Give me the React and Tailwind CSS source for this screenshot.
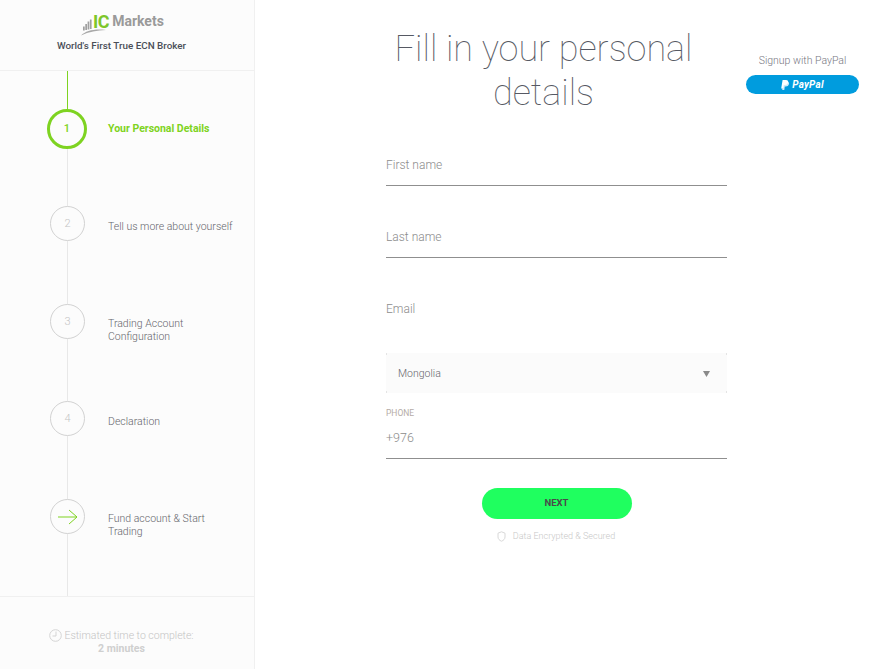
import React from 'react';

const steps = [
  { n: '2', label: ['Tell us more about yourself'], h: 'h-[98px]', mt: 'mt-[14px]' },
  { n: '3', label: ['Trading Account', 'Configuration'], h: 'h-[97px]', mt: 'mt-[13px]' },
  { n: '4', label: ['Declaration'], h: 'h-[98px]', mt: 'mt-[14px]' },
];

const Field = ({ label, line, className }) => (
  <div className={`flex items-center text-[12px] font-light text-[#8c8c8c] ${line ? 'border-b border-[#8f8f8f]' : ''} ${className}`}>
    {label}
  </div>
);

const Sidebar = () => (
  <aside className="relative flex w-[255px] shrink-0 flex-col border-r border-[#f0f0f0] bg-[#fcfcfc]">
    <div className="flex h-[71px] flex-col items-center border-b border-[#f0f0f0] pr-[11px]">
      <div className="ml-[2px] mt-[11px] flex h-[26px] items-start">
        <svg width="28" height="26" viewBox="0 0 28 26">
          <path d="M2 19.500h1.700v-4H2zM4.300 19h1.700v-6H4.300zM6.600 18.500h1.700V10.500H6.600zM8.900 18h1.700V8.500H8.900z" fill="#a0a0a0" />
          <path d="M0 24.500C5 19.500 14 17.500 25 19 16 19.500 8 20.500 0 24.500z" fill="#a8a8a8" />
        </svg>
        <span className="ml-[-16px] text-[18px] font-bold leading-[21px] tracking-[-0.5px] text-[#7dc62b]">IC</span>
        <span className="ml-[3px] text-[14px] font-bold leading-[21px] text-[#9a9a9a]">Markets</span>
      </div>
      <div className="mt-[2px] text-[9.850px] font-medium text-[#4b4f58]">World's First True ECN Broker</div>
    </div>

    <div className="absolute left-[67px] top-[71px] h-[525px] w-px bg-[#e8e8e8]" />
    <div className="absolute left-[67px] top-[71px] h-[38px] w-px bg-[#7ed321]" />

    <div className="relative h-[525px]">
      <div className="flex h-[78px] items-end pl-[47px]">
        <div className="flex h-[40px] w-[40px] items-center justify-center rounded-full border-[3px] border-[#7ed321] bg-[#fcfcfc] text-[11px] font-medium text-[#7ed321]">1</div>
        <div className="ml-[21px] flex h-[40px] items-center text-[10.500px] font-bold text-[#7ed321]">Your Personal Details</div>
      </div>
      <div className="h-[57px]" />
      {steps.map((s) => (
        <div key={s.n} className={`flex items-start pl-[50px] ${s.h}`}>
          <div className="flex h-[35px] w-[35px] shrink-0 items-center justify-center rounded-full border border-[#d2d2d2] bg-[#fcfcfc] pt-[1px] text-[11px] font-light text-[#c4c4c4]">{s.n}</div>
          <div className={`ml-[23px] text-[10.500px] font-light leading-[13px] text-[#66666c] ${s.mt}`}>
            {s.label.map((l) => <div key={l}>{l}</div>)}
          </div>
        </div>
      ))}
      <div className="flex items-start pl-[50px]">
        <div className="flex h-[35px] w-[35px] shrink-0 items-center justify-center rounded-full border border-[#d2d2d2] bg-[#fcfcfc]">
          <svg width="21" height="16" viewBox="0 0 21 16" fill="none" stroke="#7ed321" strokeWidth="1">
            <path d="M1 8h19M12 1l8 7-8 7" />
          </svg>
        </div>
        <div className="ml-[23px] mt-[13px] text-[10.500px] font-light leading-[13px] text-[#66666c]">
          <div>Fund account &amp; Start</div>
          <div>Trading</div>
        </div>
      </div>
    </div>

    <div className="flex flex-1 flex-col items-center border-t border-[#f0f0f0] pr-[11px] pt-[32px] text-[10.500px] font-light leading-[13px] text-[#c4c4c4]">
      <div className="flex items-center">
        <svg width="13" height="13" viewBox="0 0 13 13" fill="none" stroke="#d4d4d4" strokeWidth="1">
          <circle cx="6.500" cy="6.500" r="5.800" />
          <path d="M7 2.500v4.500H3.500" />
        </svg>
        <span className="ml-[2px]">Estimated time to complete:</span>
      </div>
      <div className="font-bold text-[#cfcfcf]">2 minutes</div>
    </div>
  </aside>
);

const App = () => {
  return (
    <div className="flex h-[669px] w-[875px] overflow-hidden bg-white font-['Roboto',sans-serif]">
      <Sidebar />

      <main className="flex">
        <div className="ml-[131px] w-[341px]">
          <h1 className="mt-[27px] w-[315px] text-center text-[36px] font-thin leading-[44px] text-[#565963]">
            Fill in your personal details
          </h1>
          <Field label="First name" line className="mt-[30px] h-[41px]" />
          <Field label="Last name" line className="mt-[30px] h-[42px]" />
          <Field label="Email" className="mt-[30px] h-[42px] pb-[1px]" />
          <div className="relative mt-[23px] flex h-[40px] items-center justify-between bg-[#fbfbfb] pl-[12px] pr-[17px] pt-[1px] text-[10.500px] font-light text-[#66666c]">
            Mongolia
            <svg width="7" height="6" viewBox="0 0 7 6"><path d="M0 0h7L3.500 6z" fill="#8a8a8a" /></svg>
            <span className="absolute left-0 top-0 h-[2px] w-px bg-[#e4e4e4]" />
            <span className="absolute right-0 top-0 h-[2px] w-px bg-[#e4e4e4]" />
            <span className="absolute bottom-0 left-0 h-[2px] w-px bg-[#e4e4e4]" />
            <span className="absolute bottom-0 right-0 h-[2px] w-px bg-[#e4e4e4]" />
          </div>
          <div className="mt-[15px] text-[8.500px] leading-[10px] text-[#b5aca6]">PHONE</div>
          <Field label="+976" line className="h-[41px] pt-[1px] !text-[12.500px]" />
          <button className="mx-auto mt-[29px] flex h-[31px] w-[150px] items-center justify-center rounded-full bg-[#1fff5f] text-[9.500px] font-bold text-[#4a4a4a]">
            NEXT
          </button>
          <div className="mt-[11px] flex items-center justify-center pr-[1px] text-[9px] font-light text-[#c8c8c8]">
            <svg width="9" height="11" viewBox="0 0 9 11" fill="none" stroke="#d8d8d8" strokeWidth="1">
              <path d="M4.500 .800 8 2.200V6c0 2-1.500 3.400-3.500 4.200C2.500 9.400 1 8 1 6V2.200z" />
            </svg>
            <span className="ml-[7px]">Data Encrypted &amp; Secured</span>
          </div>
        </div>

        <div className="ml-[19px] mt-[55px] flex w-[113px] flex-col items-center">
          <div className="text-[10.500px] font-light leading-[12px] text-[#77777f]">Signup with PayPal</div>
          <div className="mt-[8px] flex h-[19px] w-full items-center justify-center rounded-full bg-[#009cde]">
            <svg width="9" height="10" viewBox="0 0 9 10">
              <path d="M2.600 1.500h3.200c1.700 0 2.600.9 2.200 2.500-.4 1.700-1.600 2.500-3.200 2.500H3.800L3.300 10H1.200z" fill="#cfe9f7" />
              <path d="M1.600 0h3.400c1.800 0 2.500 1 2.100 2.500-.4 1.700-1.500 2.500-3.200 2.500H2.800L2.300 8.500H.2z" fill="#fff" />
            </svg>
            <span className="ml-[2px] text-[10px] font-bold italic leading-none tracking-[0.2px] text-white">PayPal</span>
          </div>
        </div>
      </main>
    </div>
  );
};

export default App;
